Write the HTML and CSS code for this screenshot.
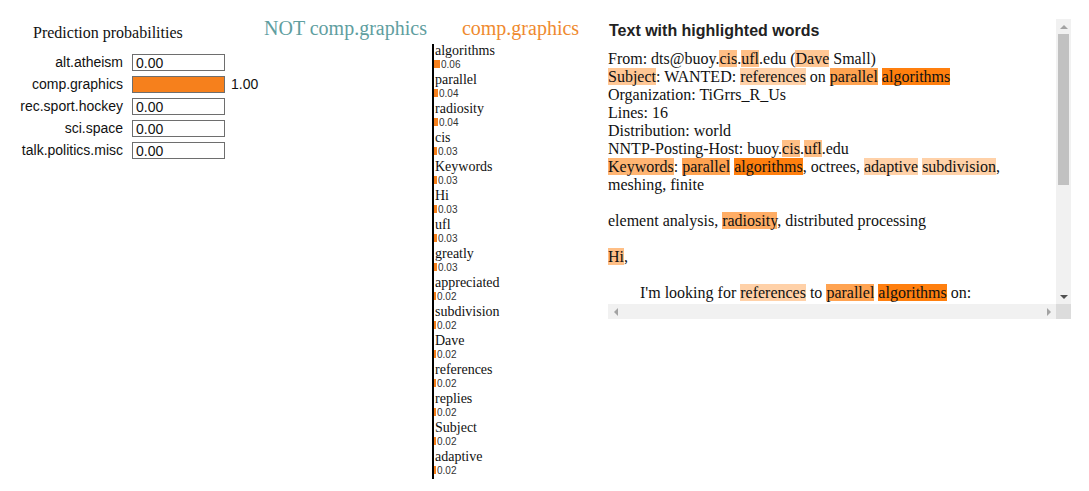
FILE: index.html
```html
<!DOCTYPE html>
<html>
<head>
<meta charset="utf-8">
<link rel="stylesheet" href="styles.css">
</head>
<body>
<div class="page">
  <section class="probs-panel">
    <div class="probs-title">Prediction probabilities</div>
    <div class="probs">
      <div class="plabel">alt.atheism</div><div class="pbox"><span class="pin">0.00</span></div><div class="pout"></div>
      <div class="plabel">comp.graphics</div><div class="pbox full"></div><div class="pout">1.00</div>
      <div class="plabel">rec.sport.hockey</div><div class="pbox"><span class="pin">0.00</span></div><div class="pout"></div>
      <div class="plabel">sci.space</div><div class="pbox"><span class="pin">0.00</span></div><div class="pout"></div>
      <div class="plabel">talk.politics.misc</div><div class="pbox"><span class="pin">0.00</span></div><div class="pout"></div>
    </div>
  </section>

  <section class="weights-panel">
    <div class="wheads">
      <span class="whead neg">NOT comp.graphics</span>
      <span class="whead pos">comp.graphics</span>
    </div>
    <div class="chart">
      <div class="wrow"><div class="wlabel">algorithms</div><div class="wval"><span class="wbar" style="width:6px"></span><span class="wnum">0.06</span></div></div>
      <div class="wrow"><div class="wlabel">parallel</div><div class="wval"><span class="wbar" style="width:4px"></span><span class="wnum">0.04</span></div></div>
      <div class="wrow"><div class="wlabel">radiosity</div><div class="wval"><span class="wbar" style="width:4px"></span><span class="wnum">0.04</span></div></div>
      <div class="wrow"><div class="wlabel">cis</div><div class="wval"><span class="wbar" style="width:3px"></span><span class="wnum">0.03</span></div></div>
      <div class="wrow"><div class="wlabel">Keywords</div><div class="wval"><span class="wbar" style="width:3px"></span><span class="wnum">0.03</span></div></div>
      <div class="wrow"><div class="wlabel">Hi</div><div class="wval"><span class="wbar" style="width:3px"></span><span class="wnum">0.03</span></div></div>
      <div class="wrow"><div class="wlabel">ufl</div><div class="wval"><span class="wbar" style="width:3px"></span><span class="wnum">0.03</span></div></div>
      <div class="wrow"><div class="wlabel">greatly</div><div class="wval"><span class="wbar" style="width:3px"></span><span class="wnum">0.03</span></div></div>
      <div class="wrow"><div class="wlabel">appreciated</div><div class="wval"><span class="wbar" style="width:2px"></span><span class="wnum">0.02</span></div></div>
      <div class="wrow"><div class="wlabel">subdivision</div><div class="wval"><span class="wbar" style="width:2px"></span><span class="wnum">0.02</span></div></div>
      <div class="wrow"><div class="wlabel">Dave</div><div class="wval"><span class="wbar" style="width:2px"></span><span class="wnum">0.02</span></div></div>
      <div class="wrow"><div class="wlabel">references</div><div class="wval"><span class="wbar" style="width:2px"></span><span class="wnum">0.02</span></div></div>
      <div class="wrow"><div class="wlabel">replies</div><div class="wval"><span class="wbar" style="width:2px"></span><span class="wnum">0.02</span></div></div>
      <div class="wrow"><div class="wlabel">Subject</div><div class="wval"><span class="wbar" style="width:2px"></span><span class="wnum">0.02</span></div></div>
      <div class="wrow"><div class="wlabel">adaptive</div><div class="wval"><span class="wbar" style="width:2px"></span><span class="wnum">0.02</span></div></div>
    </div>
  </section>

  <section class="text-panel">
    <div class="scroll-content">
    <h3 class="text-title">Text with highlighted words</h3>
<div class="doc">From: dts@buoy.<span class="h5">cis</span>.<span class="h5">ufl</span>.edu (<span class="h4">Dave</span> Small)
<span class="h4">Subject</span>: WANTED: <span class="h3">references</span> on <span class="h7">parallel</span> <span class="h10">algorithms</span>
Organization: TiGrrs_R_Us
Lines: 16
Distribution: world
NNTP-Posting-Host: buoy.<span class="h5">cis</span>.<span class="h5">ufl</span>.edu
<span class="h6">Keywords</span>: <span class="h7">parallel</span> <span class="h10">algorithms</span>, octrees, <span class="h3">adaptive</span> <span class="h3">subdivision</span>,
meshing, finite

element analysis, <span class="h65">radiosity</span>, distributed processing

<span class="h5">Hi</span>,

&#9;I'm looking for <span class="h3">references</span> to <span class="h7">parallel</span> <span class="h10">algorithms</span> on:</div>
    </div>
    <div class="vbar">
      <div class="sbtn"><span class="tri up"></span></div>
      <div class="vtrack"><div class="vthumb"></div></div>
      <div class="sbtn"><span class="tri down"></span></div>
    </div>
    <div class="hbar">
      <div class="sbtn"><span class="tri left"></span></div>
      <div class="htrack"></div>
      <div class="sbtn"><span class="tri right"></span></div>
    </div>
    <div class="corner"></div>
  </section>
</div>
</body>
</html>
```

FILE: styles.css
```css
html, body {
  margin: 0;
  padding: 0;
  background: #ffffff;
}

.page {
  display: flex;
  align-items: flex-start;
}

/* Left: prediction probabilities */
.probs-panel {
  width: 264px;
  flex: none;
  padding-top: 24px;
}

.probs-title {
  font-family: "Liberation Serif", serif;
  font-size: 16px;
  line-height: 18px;
  color: #111;
  margin-left: 33px;
}

.probs {
  margin-top: 12px;
  margin-left: 20px;
  display: grid;
  grid-template-columns: 103px 93px auto;
  column-gap: 9px;
  row-gap: 5px;
  font-family: "Liberation Sans", Arial, sans-serif;
  font-size: 14px;
  color: #111;
}

.plabel {
  text-align: right;
  line-height: 17px;
  height: 17px;
}

.pbox {
  box-sizing: border-box;
  height: 17px;
  border: 1.5px solid #6e6e6e;
  background: #fff;
  display: flex;
  align-items: center;
}

.pbox.full {
  background: #f6801c;
}

.pin {
  padding-left: 3px;
  line-height: 14px;
}

.pout {
  margin-left: -3px;
  line-height: 17px;
}

/* Middle: feature weights */
.weights-panel {
  width: 344px;
  flex: none;
  padding-top: 17px;
}

.wheads {
  display: flex;
  gap: 35px;
  font-family: "Liberation Serif", serif;
  font-size: 20px;
  line-height: 22px;
}

.whead.neg { color: #5f9ea0; }
.whead.pos { color: #ef8a2f; }

.chart {
  margin-top: 5px;
  margin-left: 168px;
  border-left: 2px solid #000;
  width: 150px;
}

.wrow {
  height: 29px;
}

.wlabel {
  font-family: "Liberation Serif", serif;
  font-size: 14px;
  line-height: 14px;
  height: 14px;
  padding-left: 1px;
  color: #111;
}

.wval {
  height: 15px;
  display: flex;
  align-items: flex-start;
}

.wbar {
  display: block;
  height: 8px;
  margin-top: 2px;
  background: #f6801c;
}

.wnum {
  font-family: "Liberation Sans", Arial, sans-serif;
  font-size: 10px;
  line-height: 12px;
  margin-top: 1px;
  margin-left: 1px;
  color: #333;
}

/* Right: text with highlighted words */
.text-panel {
  margin-top: 19px;
  flex: none;
  display: grid;
  grid-template-columns: 448px 15px;
  grid-template-rows: 285px 15px;
}

.scroll-content {
  overflow: hidden;
}

.text-title {
  margin: 0;
  padding: 2px 0 0 1px;
  height: 31px;
  box-sizing: border-box;
  font-family: "Liberation Sans", Arial, sans-serif;
  font-weight: 700;
  font-size: 16px;
  line-height: 20px;
  color: #222;
}

.doc {
  font-family: "Liberation Serif", serif;
  font-size: 16px;
  line-height: 18px;
  color: #111;
  white-space: pre-wrap;
  tab-size: 8;
}

.h10 { background: rgba(255, 127, 14, 1); }
.h7  { background: rgba(255, 127, 14, 0.72); }
.h65 { background: rgba(255, 127, 14, 0.64); }
.h6  { background: rgba(255, 127, 14, 0.58); }
.h5  { background: rgba(255, 127, 14, 0.5); }
.h4  { background: rgba(255, 127, 14, 0.44); }
.h3  { background: rgba(255, 127, 14, 0.36); }

/* Scrollbars */
.vbar {
  background: #f1f1f1;
  display: flex;
  flex-direction: column;
}

.hbar {
  background: #f1f1f1;
  display: flex;
}

.corner {
  background: #dcdcdc;
}

.sbtn {
  width: 15px;
  height: 15px;
  flex: none;
  display: flex;
  align-items: center;
  justify-content: center;
}

.vtrack {
  flex: 1;
  padding: 0 2px;
}

.htrack {
  flex: 1;
}

.vthumb {
  height: 151px;
  background: #c1c1c1;
}

.tri {
  width: 0;
  height: 0;
  display: block;
}

.tri.up {
  border-left: 4px solid transparent;
  border-right: 4px solid transparent;
  border-bottom: 4px solid #a3a3a3;
}

.tri.down {
  border-left: 4px solid transparent;
  border-right: 4px solid transparent;
  border-top: 4px solid #505050;
}

.tri.left {
  border-top: 4px solid transparent;
  border-bottom: 4px solid transparent;
  border-right: 4px solid #a3a3a3;
}

.tri.right {
  border-top: 4px solid transparent;
  border-bottom: 4px solid transparent;
  border-left: 4px solid #a3a3a3;
}
```
